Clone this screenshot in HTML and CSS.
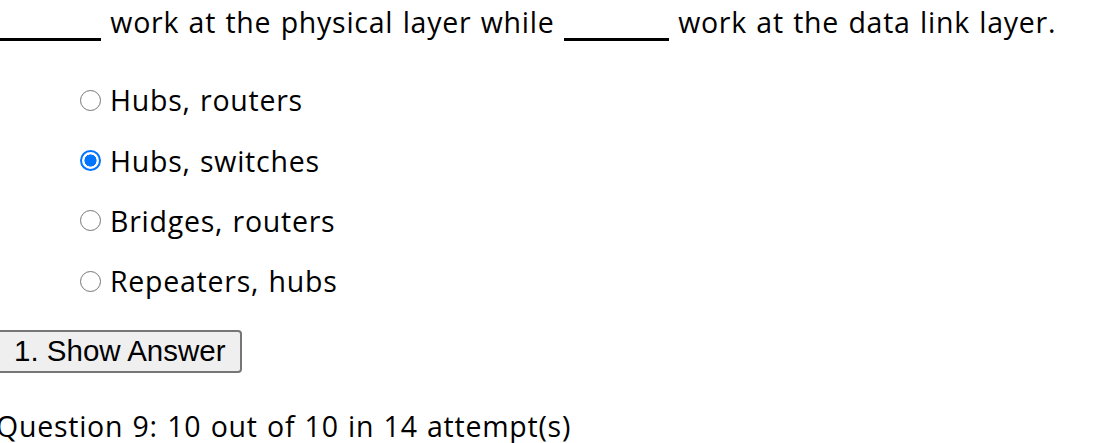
FILE: index.html
```html
<!DOCTYPE html>
<html>
<head>
<meta charset="utf-8">
<link rel="stylesheet" href="styles.css">
</head>
<body>
<div class="page">
  <p class="question"><span class="blank"></span> work at the physical layer while <span class="blank"></span> work at the data link layer.</p>
  <ul class="options">
    <li class="option"><label><input type="radio" name="q9"><span>Hubs, routers</span></label></li>
    <li class="option"><label><input type="radio" name="q9" checked><span>Hubs, switches</span></label></li>
    <li class="option"><label><input type="radio" name="q9"><span>Bridges, routers</span></label></li>
    <li class="option"><label><input type="radio" name="q9"><span>Repeaters, hubs</span></label></li>
  </ul>
  <button class="show-answer" type="button">1. Show Answer</button>
  <p class="score">Question 9: 10 out of 10 in 14 attempt(s)</p>
</div>
</body>
</html>
```
FILE: styles.css
```css
html, body {
  margin: 0;
  padding: 0;
  background: #fff;
}
body {
  overflow: hidden;
}
.page {
  margin-left: -4px;
  font-family: "Open Sans", "Noto Sans", sans-serif;
  font-size: 28.5px;
  letter-spacing: 0.75px;
  word-spacing: 1.2px;
  color: #000;
}
.question {
  margin: 0;
  line-height: 44px;
  white-space: nowrap;
}
.blank {
  display: inline-block;
  width: 105px;
  height: 0;
  border-bottom: 3px solid #000;
  vertical-align: -8px;
}
.options {
  list-style: none;
  margin: 26px 0 0 0;
  padding: 0 0 0 84px;
}
.option {
  height: 60.4px;
  display: flex;
  align-items: center;
}
.option label {
  display: flex;
  align-items: center;
  gap: 9px;
}
.option input {
  appearance: none;
  -webkit-appearance: none;
  box-sizing: border-box;
  flex: 0 0 21px;
  width: 21px;
  min-width: 21px;
  height: 21px;
  margin: 0;
  border: 1.5px solid #767676;
  border-radius: 50%;
  background: #fff;
}
.option input:checked {
  border: 2.5px solid #0075ff;
  background: radial-gradient(circle, #0075ff 0 5.8px, #fff 6.3px);
}
.show-answer {
  margin-top: 18px;
  height: 43px;
  padding: 0 14px 0 16px;
  font-family: "Liberation Sans", Arial, sans-serif;
  font-size: 29.5px;
  letter-spacing: 0;
  word-spacing: 0;
  color: #000;
  background: #efefef;
  border: 2px solid #767676;
  border-radius: 4px;
}
.score {
  margin: 36px 0 0 0;
  line-height: 34px;
  white-space: nowrap;
}
```
